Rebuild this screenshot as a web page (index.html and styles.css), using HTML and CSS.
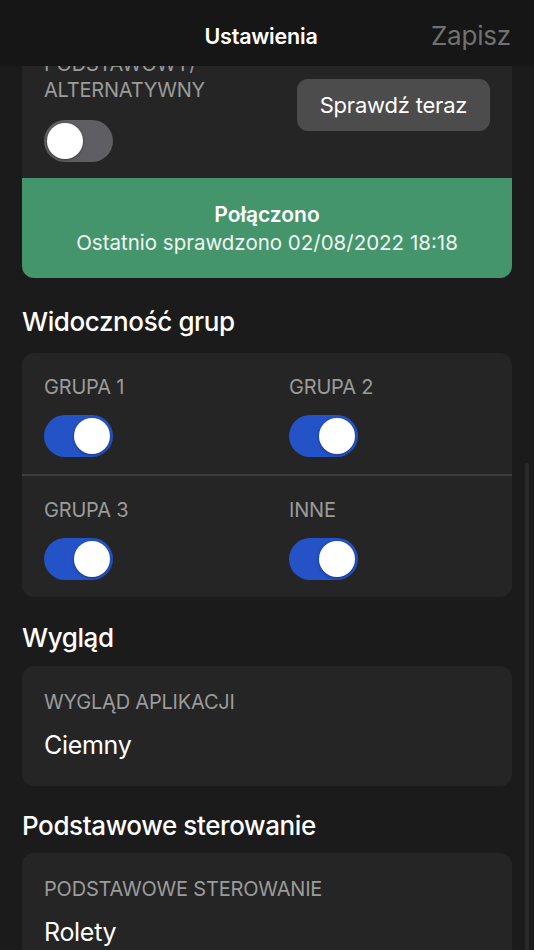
FILE: index.html
```html
<!DOCTYPE html>
<html lang="pl">
<head>
<meta charset="utf-8">
<link rel="stylesheet" href="styles.css">
</head>
<body>
<header class="navbar">
  <div class="nav-title">Ustawienia</div>
  <div class="nav-action">Zapisz</div>
</header>
<main class="content">
  <section class="card card-conn">
    <div class="conn-row">
      <div class="conn-left">
        <div class="label label-wrap">Podstawowy/ alternatywny</div>
        <div class="toggle"><span class="knob"></span></div>
      </div>
      <button class="btn">Sprawdź teraz</button>
    </div>
  </section>
  <div class="status">
    <div class="status-title">Połączono</div>
    <div class="status-sub">Ostatnio sprawdzono 02/08/2022 18:18</div>
  </div>

  <h2 class="section-title section-first">Widoczność grup</h2>
  <section class="card">
    <div class="grid-row">
      <div class="cell">
        <div class="label">Grupa 1</div>
        <div class="toggle on"><span class="knob"></span></div>
      </div>
      <div class="cell">
        <div class="label">Grupa 2</div>
        <div class="toggle on"><span class="knob"></span></div>
      </div>
    </div>
    <div class="divider"></div>
    <div class="grid-row">
      <div class="cell">
        <div class="label">Grupa 3</div>
        <div class="toggle on"><span class="knob"></span></div>
      </div>
      <div class="cell">
        <div class="label">Inne</div>
        <div class="toggle on"><span class="knob"></span></div>
      </div>
    </div>
  </section>

  <h2 class="section-title">Wygląd</h2>
  <section class="card card-value">
    <div class="label">Wygląd aplikacji</div>
    <div class="value">Ciemny</div>
  </section>

  <h2 class="section-title">Podstawowe sterowanie</h2>
  <section class="card card-value">
    <div class="label">Podstawowe sterowanie</div>
    <div class="value">Rolety</div>
  </section>
</main>
<div class="scroll-indicator"></div>
</body>
</html>
```

FILE: styles.css
```css
* { box-sizing: border-box; }

html, body {
  margin: 0;
  padding: 0;
  height: 100%;
  overflow: hidden;
}

body {
  background: #1b1b1b;
  color: #ffffff;
  font-family: Inter, "Noto Sans", sans-serif;
  -webkit-font-smoothing: antialiased;
}

.navbar {
  position: fixed;
  top: 0;
  left: 0;
  right: 0;
  height: 66px;
  background: #161616;
  z-index: 10;
}

.nav-title {
  position: absolute;
  left: 0;
  right: 12px;
  top: 22px;
  text-align: center;
  font-size: 21.5px;
  font-weight: 600;
  line-height: 28px;
  letter-spacing: -0.2px;
}

.nav-action {
  position: absolute;
  right: 23px;
  top: 19px;
  font-size: 26px;
  line-height: 34px;
  color: #717171;
  letter-spacing: -0.2px;
}

.content {
  padding: 34px 22px 0 22px;
}

.card {
  background: #252525;
  border-radius: 12px;
}

.card-conn {
  border-radius: 12px 12px 0 0;
  padding: 17px 22px 16px 22px;
}

.conn-row {
  display: flex;
  justify-content: space-between;
  align-items: flex-start;
}

.conn-left {
  display: flex;
  flex-direction: column;
  gap: 17px;
}

.label {
  font-size: 20px;
  line-height: 24px;
  color: #9b9b9b;
  text-transform: uppercase;
  letter-spacing: -0.2px;
}

.label-wrap {
  width: 180px;
  line-height: 26px;
}

.btn {
  margin-top: 28px;
  width: 193px;
  height: 52px;
  border: none;
  border-radius: 11px;
  background: #4c4c4c;
  color: #ffffff;
  font-family: inherit;
  font-size: 22px;
  letter-spacing: -0.2px;
  padding: 0;
}

.toggle {
  position: relative;
  width: 69px;
  height: 42px;
  border-radius: 21px;
  background: #5f5f63;
}

.toggle .knob {
  position: absolute;
  top: 3px;
  left: 3px;
  width: 36px;
  height: 36px;
  border-radius: 50%;
  background: #ffffff;
  box-shadow: 0 1px 3px rgba(0,0,0,0.35);
}

.toggle.on {
  background: #2452c7;
}

.toggle.on .knob {
  left: 30px;
}

.status {
  background: #44946c;
  border-radius: 0 0 12px 12px;
  padding: 23px 10px 21px;
  text-align: center;
}

.status-title {
  font-size: 21px;
  font-weight: 600;
  line-height: 28px;
}

.status-sub {
  font-size: 20.5px;
  line-height: 28px;
  color: #f0f6f2;
}

.section-title {
  margin: 24px 0 11px 0;
  font-size: 26px;
  line-height: 32px;
  font-weight: 500;
  letter-spacing: -0.4px;
}

.section-first {
  margin: 28px 0 15px 0;
}

.section-title:nth-of-type(2) {
  margin-top: 25px;
  margin-bottom: 12px;
}

.grid-row {
  display: grid;
  grid-template-columns: 1fr 1fr;
}

.cell {
  padding: 22px 22px 17px 22px;
  display: flex;
  flex-direction: column;
  gap: 16px;
}

.divider {
  height: 2px;
  background: #3d3d3d;
}

.card-value {
  padding: 24px 22px 25px 22px;
  display: flex;
  flex-direction: column;
  gap: 15px;
}

.value {
  font-size: 25px;
  line-height: 32px;
  letter-spacing: -0.3px;
}

.scroll-indicator {
  position: fixed;
  right: 5px;
  top: 463px;
  width: 4px;
  height: 500px;
  border-radius: 2px;
  background: rgba(255,255,255,0.06);
}
```
